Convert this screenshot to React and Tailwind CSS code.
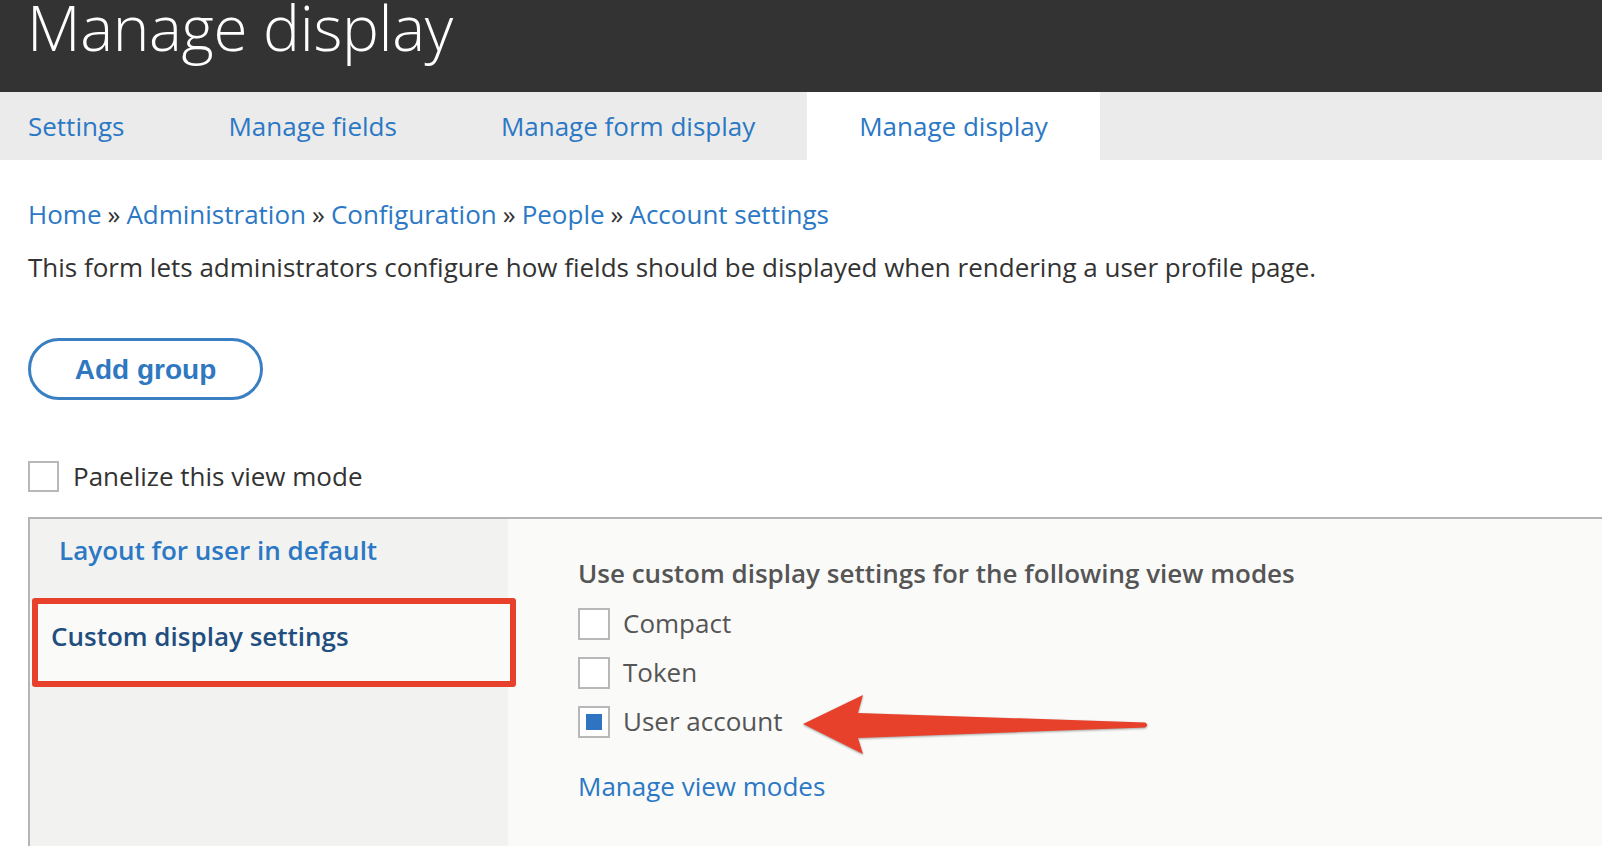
import React from "react";

const Box = ({ checked, size = "w-[32px] h-[32px]" }) => (
  <span className={`${size} shrink-0 border-2 border-[#b8b8b8] bg-white flex items-center justify-center`}>
    {checked && <span className="w-[16px] h-[16px] bg-[#2f74c0]" />}
  </span>
);

export default function App() {
  const sep = <span className="text-[#333] mx-[6px]">»</span>;
  return (
    <div className="w-full min-h-[846px] bg-white overflow-hidden" style={{ fontFamily: '"Open Sans", sans-serif' }}>
      {/* Header */}
      <div className="h-[92px] bg-[#333333] overflow-hidden pl-[27px]">
        <h1 className="text-[62px] font-light leading-[63px] text-white mt-[-4px] tracking-[-0.3px]">Manage display</h1>
      </div>
      {/* Tabs */}
      <div className="h-[68px] bg-[#ebebeb] flex text-[26px] text-[#2b78c5]">
        <div className="flex items-center pl-[28px] pr-[52px]">Settings</div>
        <div className="flex items-center px-[52px]">Manage fields</div>
        <div className="flex items-center px-[52px]">Manage form display</div>
        <div className="flex items-center px-[52px] bg-white">Manage display</div>
      </div>
      {/* Content */}
      <div className="pl-[28px] text-[26px] leading-[39px] text-[#333]">
        <div className="mt-[35px] text-[#2b78c5]">
          <span>Home</span>{sep}<span>Administration</span>{sep}<span>Configuration</span>{sep}<span>People</span>{sep}<span>Account settings</span>
        </div>
        <p className="mt-[14px]">This form lets administrators configure how fields should be displayed when rendering a user profile page.</p>
        <button
          className="mt-[51px] w-[235px] h-[62px] rounded-full border-[3px] border-[#3a7fc2] text-[#2f78bf] text-[28px] font-bold flex items-center justify-center"
          style={{ fontFamily: '"Liberation Sans", Arial, sans-serif' }}
        >
          Add group
        </button>
        <div className="mt-[61px] flex items-center gap-[14px] h-[31px]">
          <Box size="w-[31px] h-[31px]" />
          <span>Panelize this view mode</span>
        </div>
        {/* Panel */}
        <div className="mt-[25px] border-t-2 border-l-2 border-[#b5b5b5] flex h-[340px]">
          <div className="w-[478px] bg-[#f2f2f0] flex flex-col">
            <div className="h-[84px] pt-[12px] pl-[29px] font-semibold text-[#2b78c5]">Layout for user in default</div>
            <div className="relative z-10 h-[79px] bg-[#fafaf9] flex items-center pb-[12px] pl-[21px] font-semibold text-[#1f4e7f]">
              Custom display settings
              <div className="absolute left-[2px] top-[-5px] w-[484px] h-[89px] border-[6px] border-[#e8412b] rounded-[3px]" />
            </div>
          </div>
          <div className="relative flex-1 bg-[#fafaf9] pl-[70px] pt-[35px]">
            <div className="font-semibold text-[#555]">Use custom display settings for the following view modes</div>
            <div className="mt-[6px] text-[#555]">
              <div className="h-[49px] flex items-center gap-[13px]"><Box /><span>Compact</span></div>
              <div className="h-[49px] flex items-center gap-[13px]"><Box /><span>Token</span></div>
              <div className="h-[49px] flex items-center gap-[13px]"><Box checked /><span>User account</span></div>
            </div>
            <div className="mt-[21px] text-[#2b78c5]">Manage view modes</div>
            <svg
              className="absolute left-[290px] top-[170px] drop-shadow-[0_1px_1px_rgba(0,0,0,0.35)]"
              width="356"
              height="70"
              viewBox="0 0 356 70"
            >
              <path d="M5 35 L65 6 L60 24 L347 33.5 Q351.5 36 347 38.5 L60 49 L65 65 Z" fill="#e8412b" />
            </svg>
          </div>
        </div>
      </div>
    </div>
  );
}
